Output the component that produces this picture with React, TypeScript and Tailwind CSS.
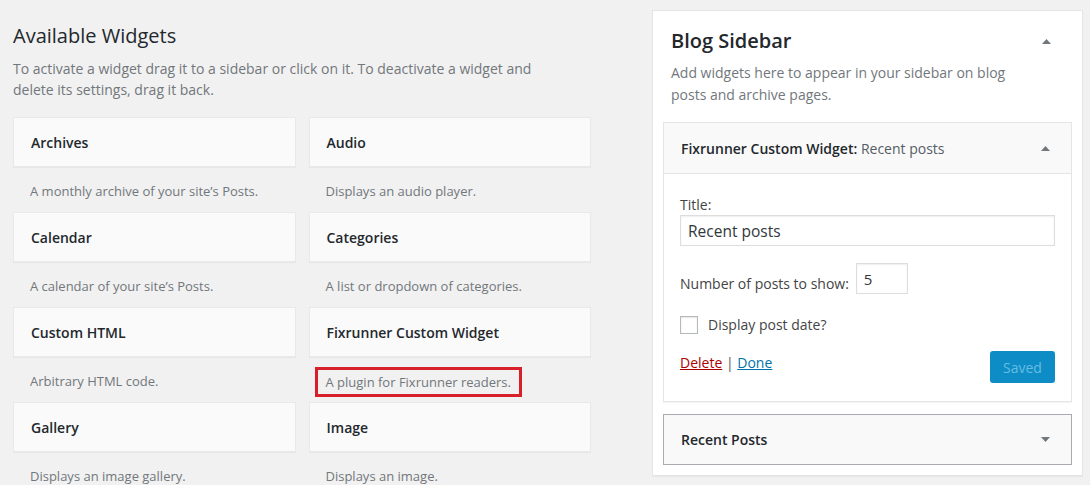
const widgets = [
  { title: 'Archives', desc: "A monthly archive of your site’s Posts." },
  { title: 'Audio', desc: 'Displays an audio player.' },
  { title: 'Calendar', desc: "A calendar of your site’s Posts." },
  { title: 'Categories', desc: 'A list or dropdown of categories.' },
  { title: 'Custom HTML', desc: 'Arbitrary HTML code.' },
  { title: 'Fixrunner Custom Widget', desc: 'A plugin for Fixrunner readers.', marked: true },
  { title: 'Gallery', desc: 'Displays an image gallery.' },
  { title: 'Image', desc: 'Displays an image.' },
];

function Caret({ down = false }: { down?: boolean }) {
  return (
    <svg width="9" height="5" viewBox="0 0 9 5" className="shrink-0">
      {down ? <path d="M0 0h9L4.5 5z" fill="#72777c" /> : <path d="M0 5h9L4.5 0z" fill="#72777c" />}
    </svg>
  );
}

export default function App() {
  return (
    <div
      className="flex h-[485px] w-[1090px] overflow-hidden bg-[#f1f1f1] pl-[13px] text-[#23282d]"
      style={{ fontFamily: '"Open Sans", "Noto Sans", sans-serif' }}
    >
      {/* Available widgets */}
      <section className="w-[578px] shrink-0 pt-[22px]">
        <h2 className="text-[20px] leading-[28px] font-normal">Available Widgets</h2>
        <p className="mt-[8px] max-w-[545px] text-[14px] leading-[21px] text-[#72777c]">
          To activate a widget drag it to a sidebar or click on it. To deactivate a widget and delete its settings, drag it back.
        </p>
        <div className="mt-[17px] grid grid-cols-2 gap-x-[13px]">
          {widgets.map((w) => (
            <div key={w.title} className="flex flex-col">
              <div className="flex h-[50px] items-center border border-[#e9e9e9] bg-[#fafafa] pl-[17px] text-[14px] font-semibold shadow-[0_1px_1px_rgba(0,0,0,0.04)]">
                {w.title}
              </div>
              <div className="flex h-[45px] items-center pt-[5px] text-[13px] text-[#72777c]">
                {w.marked ? (
                  <span className="ml-[6px] border-[3px] border-[#d8202a] px-[8px] leading-[24px]">{w.desc}</span>
                ) : (
                  <span className="pl-[17px]">{w.desc}</span>
                )}
              </div>
            </div>
          ))}
        </div>
      </section>

      {/* Blog sidebar */}
      <section className="ml-[61px] mt-[10px] flex h-[466px] w-[431px] shrink-0 flex-col border border-[#e5e5e5] bg-white px-[10px] pt-[16px] shadow-[0_1px_1px_rgba(0,0,0,0.04)]">
        <div className="flex items-center justify-between pl-[8px] pr-[21px]">
          <h2 className="text-[20px] leading-[28px] font-semibold">Blog Sidebar</h2>
          <Caret />
        </div>
        <p className="mt-[7px] pl-[8px] pr-[40px] text-[14px] leading-[22px] text-[#72777c]">
          Add widgets here to appear in your sidebar on blog posts and archive pages.
        </p>

        <div className="mt-[16px] border border-[#e5e5e5] shadow-[0_1px_1px_rgba(0,0,0,0.04)]">
          <div className="flex h-[51px] items-center justify-between border-b border-[#e5e5e5] bg-[#f9f9f9] pl-[17px] pr-[21px] text-[14px]">
            <span>
              <b className="font-semibold">Fixrunner Custom Widget:</b>
              <span className="text-[#555d66]"> Recent posts</span>
            </span>
            <Caret />
          </div>
          <div className="px-[16px] pt-[21px] pb-[18px] text-[14px] text-[#444]">
            <div className="leading-[20px]">Title:</div>
            <input
              readOnly
              value="Recent posts"
              className="h-[31px] w-full border border-[#ddd] px-[7px] text-[15.5px] text-[#32373c] shadow-[inset_0_1px_2px_rgba(0,0,0,0.07)] outline-none"
            />
            <div className="mt-[17px] flex items-center">
              <span className="mt-[9px] mr-[7px]">Number of posts to show:</span>
              <input
                readOnly
                value="5"
                className="h-[31px] w-[52px] border border-[#ddd] px-[7px] text-[15px] text-[#32373c] shadow-[inset_0_1px_2px_rgba(0,0,0,0.07)] outline-none"
              />
            </div>
            <label className="mt-[20px] flex items-center gap-[10px]">
              <span className="h-[18px] w-[18px] border border-[#b4b9be] shadow-[inset_0_1px_2px_rgba(0,0,0,0.1)]" />
              <span>Display post date?</span>
            </label>
            <div className="mt-[16px] flex items-start justify-between">
              <div className="mt-[1px]">
                <a className="text-[#a00] underline">Delete</a>
                <span className="text-[#555]"> | </span>
                <a className="text-[#0073aa] underline">Done</a>
              </div>
              <button className="h-[32px] w-[65px] rounded-[3px] bg-[#0d8cc5] text-[14px] text-[#66bde4]">Saved</button>
            </div>
          </div>
        </div>

        <div className="mt-[12px] flex h-[51px] items-center justify-between border border-[#a8acb0] bg-[#f9f9f9] pl-[17px] pr-[21px] text-[14px] font-semibold">
          <span>Recent Posts</span>
          <Caret down />
        </div>
      </section>
    </div>
  );
}
